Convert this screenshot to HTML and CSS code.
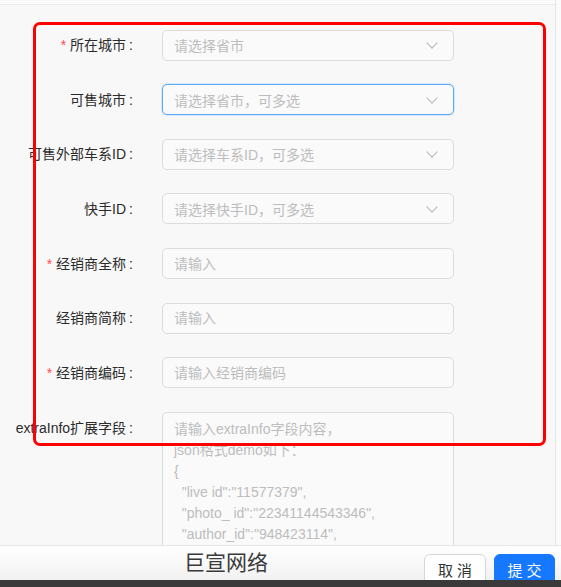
FILE: index.html
```html
<!DOCTYPE html>
<html lang="zh-CN">

<head>
  <meta charset="UTF-8">
  <meta name="viewport" content="width=device-width, initial-scale=1.0">
  <title>经销商信息</title>
  <link rel="stylesheet" href="styles.css">
</head>

<body>
  <div class="screen">
    <div class="main">
      <div class="content">
        <div class="top-strip"></div>
        <form class="form">
          <div class="row">
            <label class="label required">所在城市</label>
            <div class="select"><span class="placeholder">请选择省市</span><span class="arrow"></span></div>
          </div>
          <div class="row">
            <label class="label">可售城市</label>
            <div class="select focused"><span class="placeholder">请选择省市，可多选</span><span class="arrow"></span></div>
          </div>
          <div class="row">
            <label class="label">可售外部车系ID</label>
            <div class="select"><span class="placeholder">请选择车系ID，可多选</span><span class="arrow"></span></div>
          </div>
          <div class="row">
            <label class="label">快手ID</label>
            <div class="select"><span class="placeholder">请选择快手ID，可多选</span><span class="arrow"></span></div>
          </div>
          <div class="row">
            <label class="label required">经销商全称</label>
            <input class="input" type="text" placeholder="请输入">
          </div>
          <div class="row">
            <label class="label">经销商简称</label>
            <input class="input" type="text" placeholder="请输入">
          </div>
          <div class="row">
            <label class="label required">经销商编码</label>
            <input class="input" type="text" placeholder="请输入经销商编码">
          </div>
          <div class="row row-top">
            <label class="label">extraInfo扩展字段</label>
            <textarea class="textarea" placeholder="请输入extraInfo字段内容，&#10;json格式demo如下：&#10;{&#10;  &quot;live id&quot;:&quot;11577379&quot;,&#10;  &quot;photo_ id&quot;:&quot;22341144543346&quot;,&#10;  &quot;author_id&quot;:&quot;948423114&quot;,&#10;}"></textarea>
          </div>
        </form>
        <div class="highlight"></div>
      </div>
      <div class="track"></div>
    </div>
    <div class="footer">
      <span class="brand">巨宣网络</span>
      <div class="actions">
        <button type="button" class="btn">取 消</button>
        <button type="button" class="btn btn-primary">提 交</button>
      </div>
    </div>
    <div class="bottom-strip"></div>
  </div>
</body>

</html>
```

FILE: styles.css
```css
body {
  margin: 0;
  font-family: "Liberation Sans", "Noto Sans CJK SC", sans-serif;
  background-color: #f8f8f8;
  color: #333;
}

.screen {
  width: 561px;
  height: 587px;
  overflow: hidden;
  display: flex;
  flex-direction: column;
}

.main {
  height: 545px;
  display: flex;
  overflow: hidden;
}

.content {
  flex: 1;
  position: relative;
  overflow: hidden;
}

.top-strip {
  height: 4px;
  background: #fbfbfb;
  border-bottom: 1px solid #ececec;
}

.track {
  width: 5px;
  border-left: 1px solid #e4e4e4;
  background: #fbfbfb;
}

.form {
  padding-top: 24px;
  display: flex;
  flex-direction: column;
  gap: 22.67px;
}

.row {
  display: grid;
  grid-template-columns: 134px 292px;
  column-gap: 28px;
  align-items: center;
}

.row-top {
  align-items: start;
}

.label {
  text-align: right;
  font-size: 14px;
  line-height: 32px;
  white-space: nowrap;
  color: #2b2b2b;
}

.label::after {
  content: ":";
  margin: 0 1px 0 3px;
}

.required::before {
  content: "*";
  color: #ff4d4f;
  margin-right: 4px;
}

.select,
.input,
.textarea {
  box-sizing: border-box;
  width: 292px;
  border: 1px solid #dcdcdc;
  border-radius: 5px;
  background: #fafafa;
  font-family: inherit;
  font-size: 14px;
}

.select,
.input {
  height: 31px;
  padding: 0 11px;
}

.select {
  display: flex;
  align-items: center;
  justify-content: space-between;
}

.focused {
  border-color: #5aa9f5;
  box-shadow: 0 0 0 1px rgba(24, 144, 255, 0.15);
}

.placeholder,
.input::placeholder,
.textarea::placeholder {
  color: #bdbdbd;
}

.arrow {
  width: 7px;
  height: 7px;
  border-right: 1px solid #b8b8b8;
  border-bottom: 1px solid #b8b8b8;
  transform: rotate(45deg);
  margin: 0 6px 4px 0;
}

.input {
  outline: none;
  color: #333;
}

.textarea {
  height: 170px;
  padding: 6px 11px;
  line-height: 21px;
  resize: none;
  outline: none;
  white-space: pre-wrap;
}

.highlight {
  position: absolute;
  left: 33px;
  top: 22px;
  width: 513px;
  height: 424px;
  box-sizing: border-box;
  border: 3px solid #ff0000;
  border-radius: 7px;
  pointer-events: none;
}

.footer {
  height: 35px;
  box-sizing: border-box;
  border-top: 1px solid #e6e6e6;
  background: linear-gradient(#ffffff, #f1f1f1);
  display: flex;
  justify-content: space-between;
  overflow: hidden;
  padding: 0 6px 0 184px;
}

.brand {
  font-size: 21px;
  line-height: 34px;
  color: #3a3a3a;
}

.actions {
  display: flex;
  gap: 8px;
  padding-top: 8px;
}

.btn {
  width: 62px;
  height: 36px;
  border: 1px solid #d6d6d6;
  border-radius: 6px;
  background: #fff;
  color: #333;
  font-family: inherit;
  font-size: 15px;
  padding: 0 0 6px;
}

.btn-primary {
  width: 61px;
  border-color: #1677ff;
  background: #1677ff;
  color: #fff;
}

.bottom-strip {
  height: 7px;
  background: #3a3a3a;
}
```
